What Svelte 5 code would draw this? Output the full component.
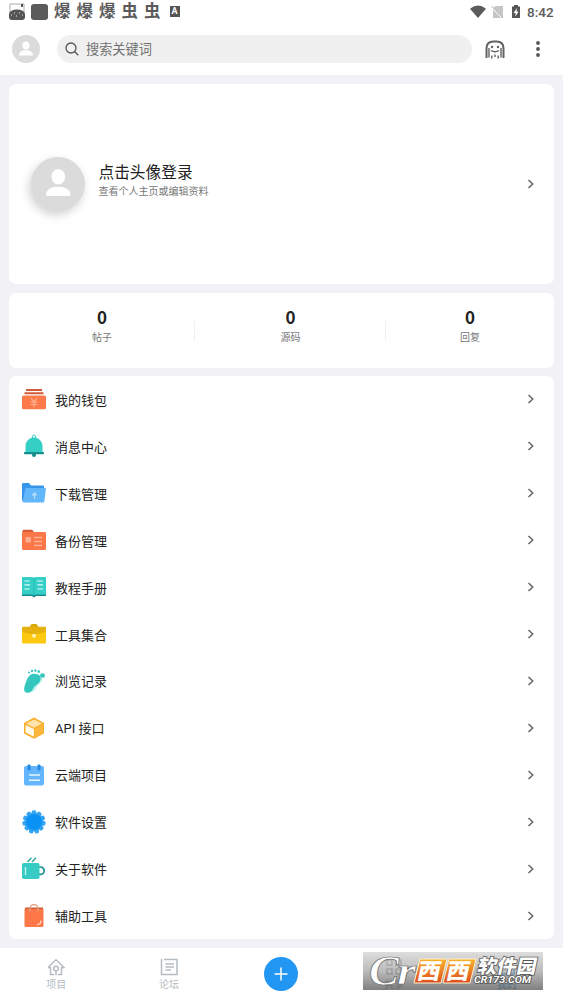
<script lang="ts">
  const stats = [
    { label: '帖子', value: 0 },
    { label: '源码', value: 0 },
    { label: '回复', value: 0 },
  ];

  const menu = [
    { icon: 'wallet', label: '我的钱包' },
    { icon: 'bell', label: '消息中心' },
    { icon: 'download', label: '下载管理' },
    { icon: 'backup', label: '备份管理' },
    { icon: 'book', label: '教程手册' },
    { icon: 'toolbox', label: '工具集合' },
    { icon: 'foot', label: '浏览记录' },
    { icon: 'cube', label: 'API 接口' },
    { icon: 'calendar', label: '云端项目' },
    { icon: 'gear', label: '软件设置' },
    { icon: 'cup', label: '关于软件' },
    { icon: 'bag', label: '辅助工具' },
  ];

  const teeth = Array.from({ length: 11 }, (_, i) => (i * 360) / 11);
</script>

{#snippet chevron()}
  <svg class="chevron" viewBox="0 0 8 10"><path d="M1.500 1l4.200 4-4.200 4" /></svg>
{/snippet}

{#snippet menuIcon(name: string)}
  <svg class="menu-icon" viewBox="0 0 24 24">
    {#if name === 'wallet'}
      <path fill="#d35a38" d="M4 2h16v2H4zM2.500 5.300h19v2h-19z" />
      <rect x="0" y="8.500" width="24" height="13.800" rx="1.500" fill="#fc7a49" />
      <path d="M9 11l3 4 3-4M8.700 15h6.600M8.700 17.500h6.600M12 15v5" fill="none" stroke="#ffb194" stroke-width="1.200" />
    {:else if name === 'bell'}
      <circle cx="12" cy="2.800" r="1.700" fill="none" stroke="#35cbc2" stroke-width="1" />
      <circle cx="12" cy="21" r="2" fill="#138b8b" />
      <path fill="#35cfc5" d="M3.500 18.500V12a8.500 8.500 0 0 1 17 0v6.500z" />
      <rect x="2" y="18" width="20" height="2.300" rx=".7" fill="#168f90" />
    {:else if name === 'download'}
      <path fill="#3795eb" d="M0 3q0-1 1-1h6l2 2.500h12q1 0 1 1V20H1q-1 0-1-1z" />
      <path fill="#62b6fa" d="M3.500 7H23q1 0 .9 1l-1.500 12q-.1 1.500-1.400 1.500H1.500q-1 0-.8-1z" />
      <path d="M12.500 18v-5.500m-2.200 2l2.200-2.500 2.200 2.500" fill="none" stroke="#b5ddff" stroke-width="1.300" />
    {:else if name === 'backup'}
      <path fill="#d65b36" d="M.5 5V3q0-1.200 1-1.200h8.500L13 5z" />
      <rect x="0" y="4" width="24" height="18" rx="1.300" fill="#fb7748" />
      <path fill="#ffad8e" d="M3.500 9H9v5.500H3.500z" />
      <path d="M12 9.500h8M12 13.500h8M12 17.500h8" stroke="#ffb093" stroke-width="1.300" />
    {:else if name === 'book'}
      <path fill="#168c8d" d="M0 4h24v17H14l-2 1.500L10 21H0z" />
      <path fill="#35cfc8" d="M0 3q0-1 1-1h9q2 0 2 1.200Q12 2 14 2h9q1 0 1 1v16.500H14q-1.500 0-2 1-.5-1-2-1H0z" />
      <path d="M2.500 6h5M2.500 9.800H8M2.500 14h5M15 6h6M15.500 9.800H21M15.500 14H21" stroke="#ddfffb" stroke-width="1.200" />
      <path d="M12 3v17" stroke="#1eb5af" stroke-width=".7" />
    {:else if name === 'toolbox'}
      <path fill="#d9a910" d="M7 6l2-3.600Q9.300 2 10 2h4q.8 0 1 .4L17 6z" />
      <rect x="0" y="5" width="24" height="16.500" rx="1.300" fill="#fac910" />
      <path fill="#e4b10e" d="M0 6q0-1.200 1.200-1.200h21.600Q24 4.800 24 6v3q-4 3-12 3T0 9z" />
      <rect x="10.300" y="12" width="3.400" height="3.600" rx=".5" fill="#fff3ba" />
    {:else if name === 'foot'}
      <path fill="#b4f0ea" d="M9 23c4 0 5-5 7-7 4-3 5-6 4-9L7 20z" />
      <path fill="#35c7be" d="M4 23.500C.2 22 3 15.500 5 10.500 6.500 6 10 4.300 14 5c5 .8 5.600 4.300 3.500 8-1.500 2.600-5 3.200-6.500 6.500-1 2.800-3.300 5-7 4z" />
      <ellipse cx="20.500" cy="6.500" rx="2.500" ry="2.300" fill="#35c7be" />
      <circle cx="7" cy="3.500" r="1" fill="#35c7be" />
      <circle cx="10" cy="2" r="1.150" fill="#35c7be" />
      <circle cx="13.300" cy="1.500" r="1.250" fill="#35c7be" />
      <circle cx="16.700" cy="2.600" r="1.350" fill="#35c7be" />
    {:else if name === 'cube'}
      <path fill="#f9ae2b" d="M12 1.500l10 5.500v10.500l-10 5.300-10-5.300V7z" />
      <path fill="#fff9e9" d="M3.500 9l8.500 4v7.800l-8.500-4.300z" />
      <path fill="#ffe3aa" d="M12 3.400L20 7.600 12 11.700 4 7.600z" />
      <path fill="#fbb73c" d="M13 12.800L21 8.500v8.300l-8 4.300z" />
    {:else if name === 'calendar'}
      <rect x="2" y="3" width="20" height="19.500" rx="2" fill="#63b6fb" />
      <rect x="5.500" y="1.500" width="3" height="6" rx="1" fill="#2489e5" />
      <rect x="15.500" y="1.500" width="3" height="6" rx="1" fill="#2489e5" />
      <path d="M7 12h11M7 17.300h11" stroke="#e8f6ff" stroke-width="1.400" />
    {:else if name === 'gear'}
      {#each teeth as angle}
        <path d="M9 5.500L10 .8q2-1 4 0l1 4.700z" fill="#35a5f3" transform="rotate({angle} 12 12)" />
      {/each}
      <circle cx="12" cy="12" r="9" fill="#2b9ff2" />
      <circle cx="12" cy="12" r="7.800" fill="#0991f3" />
    {:else if name === 'cup'}
      <path d="M5.500 5L9.500.8M10 5L14 .8" stroke="#2ea9a3" stroke-width="1.500" fill="none" />
      <path d="M17 10h1.500a3.700 3.700 0 0 1 0 7.400H17" fill="none" stroke="#168e8f" stroke-width="1.700" />
      <rect x="0" y="6" width="17.500" height="16" rx="1.800" fill="#36cbc3" />
      <path d="M3.500 10v8" stroke="#caf7ef" stroke-width="1.300" />
    {:else}
      <path fill="#d45b36" d="M3 3.500h18v3H3z" />
      <path fill="#fc7848" d="M2.500 5h19v16.500q0 1.500-1.500 1.500H4q-1.500 0-1.500-1.500z" />
      <path d="M8 7.500v-3a4 4 0 0 1 8 0v3" fill="none" stroke="#dfa17e" stroke-width="1.300" />
      <path d="M19 16.500c0 3-1 4-4 4" fill="none" stroke="#ffd4c2" stroke-width="1.300" />
    {/if}
  </svg>
{/snippet}

<div class="app">
  <header>
    <div class="status">
      <svg class="thumb" viewBox="0 0 16 17">
        <path d="M1 10V1h14v9" fill="#fff" stroke="#aaa" />
        <path fill="#555" d="M0 11q1-4.500 8-4.500t8 4.500v3q0 3-3 3H3q-3 0-3-3zM12 1h2v3h-2z" />
        <path d="M2 12h1M5 10h1M7 13h1M10 10h1M13 12h1" stroke="#eee" />
      </svg>
      <i class="square"></i>
      <span class="notes">爆爆爆虫虫</span>
      <b class="letter">A</b>
      <svg class="signals" viewBox="0 0 46 16">
        <path fill="#5b5b5b" d="M0 4.700Q8-1.700 16 4.700L8 14z" />
        <path fill="#c6c6c6" d="M25.500 2H33v12H23V4.500z" />
        <path d="M21.500 3l12 12" stroke="#fff" stroke-width="1.500" />
        <path d="M21.500 2l11.500 12" stroke="#aaa" stroke-width="1" />
        <path fill="#555" d="M42 2.500h2V1h4v1.500h2V14h-8z" />
        <path fill="#fff" d="M47 4L43.500 9h2v3.500l3-5h-2z" />
      </svg>
      <span class="time">8:42</span>
    </div>
    <div class="toolbar">
      <svg class="mini-avatar" viewBox="0 0 28 28">
        <ellipse cx="14" cy="10.500" rx="3.600" ry="3.900" />
        <path d="M7 20.500c0-3.700 3-5.200 7-5.200s7 1.500 7 5.200z" />
      </svg>
      <div class="search">
        <svg viewBox="0 0 14 14"><circle cx="6" cy="6" r="5" /><path d="M9.500 9.500l3.800 3.800" /></svg>
        <span>搜索关键词</span>
      </div>
      <svg class="ghost" viewBox="0 0 20 19">
        <path d="M1.500 18V8.500q0-7 7-7h3q7 0 7 7V18" />
        <path class="thin" d="M4 17.500V8M16 17.500V8M6.800 18.500v-3M10 17v-2.500M13.200 18.500v-3M6 10.500q4 2.500 8 0" />
        <circle cx="7" cy="7" r="1.200" />
        <circle cx="13" cy="7" r="1.200" />
      </svg>
      <svg class="more" viewBox="0 0 4 16">
        <circle cx="2" cy="2" r="1.900" /><circle cx="2" cy="8" r="1.900" /><circle cx="2" cy="14" r="1.900" />
      </svg>
    </div>
  </header>

  <main>
    <section class="card profile">
      <svg class="avatar" viewBox="0 0 54 54">
        <g transform="translate(9.500 7.500) scale(1.480)">
          <ellipse cx="12" cy="8.300" rx="4.600" ry="5.200" />
          <path d="M3.700 21.200c0-4 3-6.100 8.300-6.100s8.300 2.100 8.300 6.100z" />
        </g>
      </svg>
      <div class="who">
        <h1>点击头像登录</h1>
        <p>查看个人主页或编辑资料</p>
      </div>
      {@render chevron()}
    </section>

    <section class="card stats">
      {#each stats as stat}
        <div class="stat">
          <strong>{stat.value}</strong>
          <span>{stat.label}</span>
        </div>
      {/each}
    </section>

    <section class="card menu">
      {#each menu as item}
        <div class="row">
          {@render menuIcon(item.icon)}
          <span>{item.label}</span>
          {@render chevron()}
        </div>
      {/each}
    </section>
  </main>

  <nav>
    <div class="tab">
      <svg viewBox="0 0 18 18"><path d="M1 9.500L9 1.800l8 7.700h-2.500v7h-3.700M7.200 16.500H3.500v-7H1M9 17v-4.500" /><circle cx="9" cy="10.500" r="2.300" /></svg>
      <span>项目</span>
    </div>
    <div class="tab">
      <svg viewBox="0 0 18 18"><path d="M4 1.500h13v15H1.500V1M5.500 6h8.500M5.500 9h8.500M5.500 12h5.500" /></svg>
      <span>论坛</span>
    </div>
    <div class="tab">
      <button type="button" aria-label="add">
        <svg class="plus" viewBox="0 0 14 14"><path d="M7 .5v13M.5 7h13" /></svg>
      </button>
    </div>
    <div class="tab dim">
      <svg viewBox="0 0 18 18"><path d="M2 2h5v5H2zM11 2h5v5h-5zM2 11h5v5H2zM11 11h5v5h-5z" /></svg>
      <span>共享</span>
    </div>
    <div class="tab active">
      <svg viewBox="0 0 18 18"><path d="M2 16V9l7-7 7 7v7z" /></svg>
      <span>我的</span>
    </div>
    <svg class="watermark" viewBox="0 0 180 38">
      <defs>
        <linearGradient id="shade" x1="0" y1="0" x2="0" y2="1">
          <stop offset="0" stop-color="#d2d2d2" stop-opacity=".75" />
          <stop offset=".5" stop-color="#a5a5a5" stop-opacity=".75" />
          <stop offset="1" stop-color="#555" stop-opacity=".75" />
        </linearGradient>
        <linearGradient id="orange" x1="0" y1="0" x2="0" y2="1">
          <stop offset="0" stop-color="#f8b42c" />
          <stop offset="1" stop-color="#df4c20" />
        </linearGradient>
      </defs>
      <rect width="180" height="38" fill="url(#shade)" />
      <text class="logo" x="6" y="33" font-size="42" textLength="30" lengthAdjust="spacingAndGlyphs">C</text>
      <text class="logo" x="34" y="32" font-size="38" textLength="19" lengthAdjust="spacingAndGlyphs">r</text>
      <path d="M57 7h27l-6 24H51zM86 7h27l-6 24H80z" fill="url(#orange)" stroke="#fff2cf" />
      <g class="brand" transform="skewX(-12)">
        <text x="59" y="27" font-size="22" textLength="23" lengthAdjust="spacingAndGlyphs">西</text>
        <text x="88" y="27" font-size="22" textLength="23" lengthAdjust="spacingAndGlyphs">西</text>
        <text class="outline" x="118" y="21.500" font-size="19" textLength="59" lengthAdjust="spacingAndGlyphs">软件园</text>
      </g>
      <text class="domain" x="111" y="31" font-size="9" textLength="57" lengthAdjust="spacingAndGlyphs">CR173.COM</text>
    </svg>
  </nav>
</div>

<style>
  :global(body) {
    background: #f1f1f6;
  }

  .app {
    height: 1000px;
    display: flex;
    flex-direction: column;
    overflow: hidden;
    color: #222;
    font-family: Roboto, 'Noto Sans CJK SC', sans-serif;
  }

  header {
    height: 75px;
    background: #fff;
    flex: none;
  }

  .status {
    display: flex;
    align-items: center;
    height: 23px;
    padding: 0 8px 0 9px;
    color: #5b5b5b;
  }

  .thumb {
    width: 16px;
    height: 17px;
  }

  .square {
    width: 17px;
    height: 16px;
    border-radius: 3px;
    margin-left: 6px;
    background: #5b5b5b;
  }

  .notes {
    margin-left: 6px;
    padding-top: 1px;
    font-size: 16.500px;
    font-weight: 700;
    line-height: 22px;
    letter-spacing: 6px;
  }

  .letter {
    width: 10px;
    height: 11px;
    margin-left: 3px;
    background: #555;
    color: #fff;
    font-size: 9px;
    line-height: 11px;
    text-align: center;
  }

  .signals {
    width: 46px;
    height: 16px;
    margin-left: auto;
    overflow: visible;
  }

  .time {
    width: 27px;
    margin-left: 11px;
    margin-right: 1px;
    font-size: 13.500px;
    font-weight: 500;
    white-space: nowrap;
  }

  .toolbar {
    display: flex;
    align-items: center;
    height: 52px;
    padding: 0 23px 0 12px;
  }

  .mini-avatar {
    width: 28px;
    height: 28px;
    border-radius: 50%;
    background: #dbdbdb;
    fill: #fff;
    margin-right: 17px;
  }

  .search {
    display: flex;
    align-items: center;
    box-sizing: border-box;
    width: 415px;
    height: 28px;
    padding-left: 8px;
    border-radius: 14px;
    background: #f0f0f0;
    color: #707070;
    font-size: 13.200px;
  }

  .search span {
    padding-bottom: 2px;
  }

  .search svg {
    width: 14px;
    height: 14px;
    margin-right: 7px;
    fill: none;
    stroke: #555;
    stroke-width: 1.300;
  }

  .ghost {
    width: 20px;
    height: 19px;
    margin-left: 13px;
    fill: none;
    stroke: #626262;
    stroke-width: 2;
  }

  .ghost .thin {
    stroke-width: 1.400;
  }

  .ghost circle {
    fill: #626262;
    stroke: none;
  }

  .more {
    width: 4px;
    height: 16px;
    margin-left: auto;
    fill: #555;
  }

  main {
    display: flex;
    flex-direction: column;
    gap: 9px;
    padding: 9px 9px 0;
  }

  .card {
    display: flex;
    box-sizing: border-box;
    border-radius: 7px;
    background: #fff;
  }

  .profile {
    height: 200px;
    align-items: center;
    padding: 0 19px 0 22px;
  }

  .avatar {
    width: 54px;
    height: 54px;
    border-radius: 50%;
    background: #dbdbdb;
    box-shadow: -2px 4px 10px rgba(0, 0, 0, 0.18);
    fill: #fff;
  }

  .who {
    margin: 0 auto 6px 13.500px;
  }

  h1 {
    margin: 0;
    font-size: 15.700px;
    line-height: 20px;
    font-weight: 400;
  }

  p {
    margin: 0;
    font-size: 10px;
    line-height: 17px;
    color: #777;
  }

  .chevron {
    width: 8px;
    height: 10px;
    fill: none;
    stroke: #6a6a6a;
    stroke-width: 1.600;
  }

  .stats {
    height: 75px;
    margin-bottom: -1px;
  }

  .stat {
    position: relative;
    display: flex;
    flex-direction: column;
    align-items: center;
    padding-top: 13px;
    width: 186px;
  }

  .stat:nth-child(2) {
    width: 191px;
  }

  .stat:nth-child(3) {
    width: 168px;
  }

  .stat:not(:last-child)::after {
    content: '';
    position: absolute;
    right: 0;
    top: 28px;
    height: 20px;
    border-right: 1px solid #f0f0f0;
  }

  .stat strong {
    font-family: 'Noto Sans CJK SC', sans-serif;
    font-size: 17px;
    line-height: 22px;
    font-weight: 700;
  }

  .stat span {
    font-size: 10px;
    line-height: 20px;
    color: #777;
  }

  .menu {
    flex-direction: column;
    height: 563px;
  }

  .row {
    display: flex;
    align-items: center;
    flex: 1;
    padding: 0 19px 0 13px;
    font-size: 13px;
  }

  .row span {
    margin-right: auto;
  }

  .menu-icon {
    width: 24px;
    height: 24px;
    margin-right: 9px;
  }

  nav {
    position: relative;
    display: flex;
    height: 52px;
    margin-top: auto;
    background: #fff;
  }

  .tab {
    flex: 1;
    display: flex;
    flex-direction: column;
    align-items: center;
    padding-top: 10px;
    color: #b5bcc1;
    font-size: 10px;
    line-height: 17px;
  }

  .tab svg {
    width: 18px;
    height: 18px;
    fill: none;
    stroke: currentColor;
    stroke-width: 1.500;
  }

  .dim {
    color: #888;
  }

  .active {
    color: #1187d4;
  }

  button {
    display: grid;
    place-items: center;
    width: 34px;
    height: 34px;
    margin-top: -1px;
    border: 0;
    border-radius: 50%;
    padding: 0;
    background: #2196f3;
    color: #fff;
  }

  .tab .plus {
    width: 14px;
    height: 14px;
  }

  .watermark {
    position: absolute;
    left: 363px;
    top: 4px;
    width: 180px;
    height: 38px;
    overflow: visible;
  }

  .logo {
    font-family: 'Liberation Serif', serif;
    font-weight: 700;
    font-style: italic;
    fill: #fff;
    stroke: #666;
    stroke-width: 0.7;
  }

  .brand {
    font-weight: 900;
    fill: #fff;
  }

  .outline,
  .domain {
    fill: #fff;
    stroke: #555;
    stroke-width: 1.6;
    paint-order: stroke;
  }

  .domain {
    font-weight: 700;
    font-style: italic;
  }
</style>
